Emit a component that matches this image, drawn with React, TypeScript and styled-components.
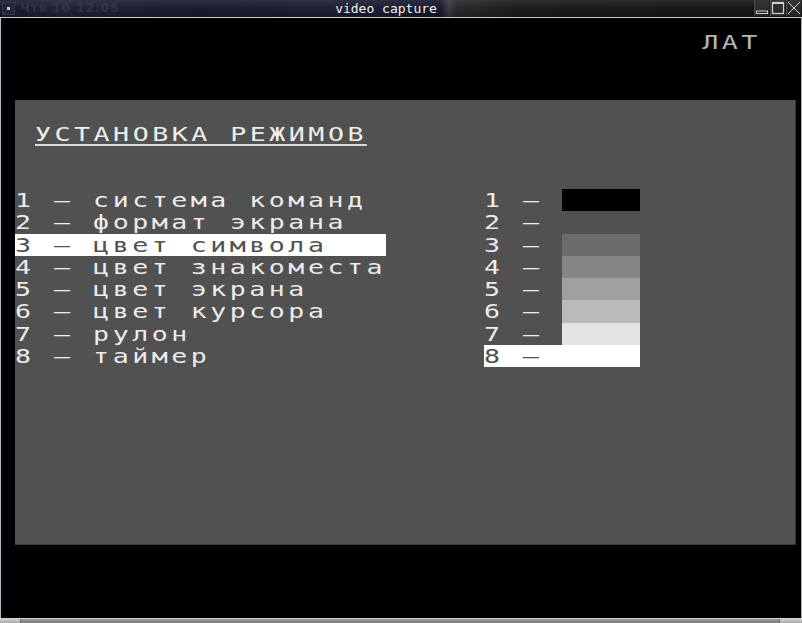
import React from "react";
import styled, { createGlobalStyle } from "styled-components";

const COL = 19.525;
const ROW = 22.25;
const SCALE = 1.4;
const FONT = 19;
const LS = COL / SCALE - FONT * 0.602;

const GlobalStyle = createGlobalStyle`
  html, body { margin: 0; padding: 0; background: #000; overflow: hidden; }
  #root { width: 802px; height: 623px; }
`;

const Window = styled.div`
  width: 802px;
  height: 623px;
  display: flex;
  flex-direction: column;
  background: #000;
  overflow: hidden;
`;

const TitleBar = styled.div`
  position: relative;
  height: 17px;
  flex: none;
  border-bottom: 1px solid #c9c9d2;
  display: flex;
  align-items: center;
  background:
    linear-gradient(180deg, rgba(255,255,255,0.08) 0%, rgba(255,255,255,0) 45%, rgba(0,0,0,0.25) 100%),
    linear-gradient(90deg, #1b1b2f 0px, #23233b 60px, #1c1c32 200px, #202038 330px, #1a1a2f 440px, #3c3c42 449px, #2b2b2b 456px, #1d1d1d 520px, #161616 802px);
`;

const MenuButton = styled.div`
  width: 13px;
  height: 13px;
  margin: 0 3px 0 2px;
  box-sizing: border-box;
  border: 1px solid #3b3b52;
  background: #25253a;
  display: flex;
  align-items: center;
  justify-content: center;
  &::after {
    content: "";
    width: 3px;
    height: 3px;
    background: #c8c8d0;
  }
`;

const GhostClock = styled.span`
  position: absolute;
  left: 20px;
  top: 1px;
  font-family: "DejaVu Sans", sans-serif;
  font-weight: bold;
  font-size: 12px;
  letter-spacing: 1px;
  color: rgba(120, 120, 150, 0.2);
  pointer-events: none;
`;

const Caption = styled.div`
  flex: 1;
  text-align: center;
  font-family: "DejaVu Sans Mono", monospace;
  font-size: 13px;
  line-height: 17px;
  color: #f2f2f2;
`;

const Controls = styled.div`
  display: flex;
  gap: 1px;
  height: 16px;
  align-self: flex-start;
  margin-right: 1px;
`;

const CtrlButton = styled.div`
  width: 15px;
  height: 16px;
  box-sizing: border-box;
  border-left: 1px solid #4a4a4a;
  background: linear-gradient(180deg, #363636, #242424);
  display: flex;
  align-items: center;
  justify-content: center;
`;

const Body = styled.div`
  flex: 1;
  display: flex;
  flex-direction: column;
  border-left: 1px solid #b6b6c4;
  border-right: 1px solid #a8a8a8;
  padding: 0 5px 0 14px;
  background: #000;
`;

const StatusArea = styled.div`
  height: 82px;
  width: ${COL * 40}px;
  box-sizing: border-box;
  padding: 13px ${COL * 2 - 4}px 0 0;
  display: flex;
  justify-content: flex-end;
  align-items: flex-start;
`;

const Glyphs = styled.span<{ $origin?: string }>`
  display: inline-block;
  vertical-align: top;
  font-family: "DejaVu Sans Mono", monospace;
  font-size: ${FONT}px;
  line-height: ${ROW}px;
  letter-spacing: ${LS}px;
  white-space: pre;
  transform: scaleX(${SCALE});
  transform-origin: ${(p) => p.$origin || "left"} center;
`;

const Indicator = styled(Glyphs)`
  color: #b4b4b4;
`;

const Panel = styled.div`
  width: ${COL * 40}px;
  height: ${ROW * 20}px;
  box-sizing: border-box;
  background: #515151;
  padding-top: ${ROW}px;
  display: flex;
  flex-direction: column;
  box-shadow: inset 0 -1px 0 #3a3a3a, inset -1px 0 0 #3a3a3a;
`;

const HeadingRow = styled.div`
  height: ${ROW}px;
  padding-left: ${COL}px;
  color: #eeeeee;
`;

const Heading = styled(Glyphs)`
  height: 20.75px;
  line-height: 22.25px;
  border-bottom: 2px solid #dadada;
  padding-top: 0.5px;
  box-sizing: content-box;
`;

const Menu = styled.div`
  margin-top: ${ROW * 2}px;
  display: flex;
`;

const OptionList = styled.div`
  width: ${COL * 24}px;
  display: flex;
  flex-direction: column;
`;

const OptionRow = styled.div<{ $active?: boolean }>`
  width: ${COL * 19}px;
  height: ${ROW}px;
  background: ${(p) => (p.$active ? "#ffffff" : "transparent")};
  color: ${(p) => (p.$active ? "#505050" : "#ececec")};
`;

const ColorList = styled.div`
  width: ${COL * 8}px;
  display: flex;
  flex-direction: column;
`;

const ColorRow = styled.div<{ $active?: boolean }>`
  display: flex;
  height: ${ROW}px;
  background: ${(p) => (p.$active ? "#ffffff" : "transparent")};
  color: ${(p) => (p.$active ? "#505050" : "#ececec")};
`;

const ColorLabel = styled.div`
  width: ${COL * 4}px;
`;

const Swatch = styled.div<{ $color: string }>`
  width: ${COL * 4}px;
  height: 100%;
  background: ${(p) => p.$color};
`;

const BottomFrame = styled.div`
  height: 5px;
  flex: none;
  box-sizing: border-box;
  border-top: 1px solid #d4d4d4;
  display: flex;
  background: linear-gradient(180deg, #9c9c9c, #7c7c7c);
`;

const Grip = styled.div<{ $w: number }>`
  width: ${(p) => p.$w}px;
  background: linear-gradient(180deg, #d0d0d0, #a8a8a8);
  border-right: 1px solid #6a6a6a;
  &:last-child {
    border-right: none;
    border-left: 1px solid #6a6a6a;
  }
`;

const Spacer = styled.div`
  flex: 1;
`;

const options = [
  "система команд",
  "формат экрана",
  "цвет символа",
  "цвет знакоместа",
  "цвет экрана",
  "цвет курсора",
  "рулон",
  "таймер",
];

const swatches = [
  "#000000",
  "transparent",
  "#6b6b6b",
  "#858585",
  "#9f9f9f",
  "#bababa",
  "#e3e3e3",
  "#ffffff",
];

const activeOption = 2;
const activeColor = 7;

export default function App() {
  return (
    <>
      <GlobalStyle />
      <Window>
        <TitleBar>
          <MenuButton />
          <GhostClock>Чтв 10 12:05</GhostClock>
          <Caption>video capture</Caption>
          <Controls>
            <CtrlButton>
              <svg width="14" height="14" viewBox="0 0 14 14">
                <rect x="1.5" y="10" width="11" height="2.5" fill="none" stroke="#cfcfcf" strokeWidth="1" />
              </svg>
            </CtrlButton>
            <CtrlButton>
              <svg width="14" height="14" viewBox="0 0 14 14">
                <rect x="1.5" y="1.5" width="11" height="11" fill="none" stroke="#cfcfcf" strokeWidth="1.2" />
                <line x1="1.5" y1="2.5" x2="12.5" y2="2.5" stroke="#cfcfcf" strokeWidth="1" />
              </svg>
            </CtrlButton>
            <CtrlButton>
              <svg width="14" height="14" viewBox="0 0 14 14">
                <path d="M1 1 L13 13 M13 1 L1 13" stroke="#cfcfcf" strokeWidth="1" fill="none" />
              </svg>
            </CtrlButton>
          </Controls>
        </TitleBar>
        <Body>
          <StatusArea>
            <Indicator $origin="right">ЛАТ</Indicator>
          </StatusArea>
          <Panel>
            <HeadingRow>
              <Heading>УСТАНОВКА РЕЖИМОВ</Heading>
            </HeadingRow>
            <Menu>
              <OptionList>
                {options.map((o, i) => (
                  <OptionRow key={o} $active={i === activeOption}>
                    <Glyphs>{`${i + 1} – ${o}`}</Glyphs>
                  </OptionRow>
                ))}
              </OptionList>
              <ColorList>
                {swatches.map((c, i) => (
                  <ColorRow key={i} $active={i === activeColor}>
                    <ColorLabel>
                      <Glyphs>{`${i + 1} –`}</Glyphs>
                    </ColorLabel>
                    <Swatch $color={c} />
                  </ColorRow>
                ))}
              </ColorList>
            </Menu>
          </Panel>
        </Body>
        <BottomFrame>
          <Grip $w={20} />
          <Spacer />
          <Grip $w={22} />
        </BottomFrame>
      </Window>
    </>
  );
}
